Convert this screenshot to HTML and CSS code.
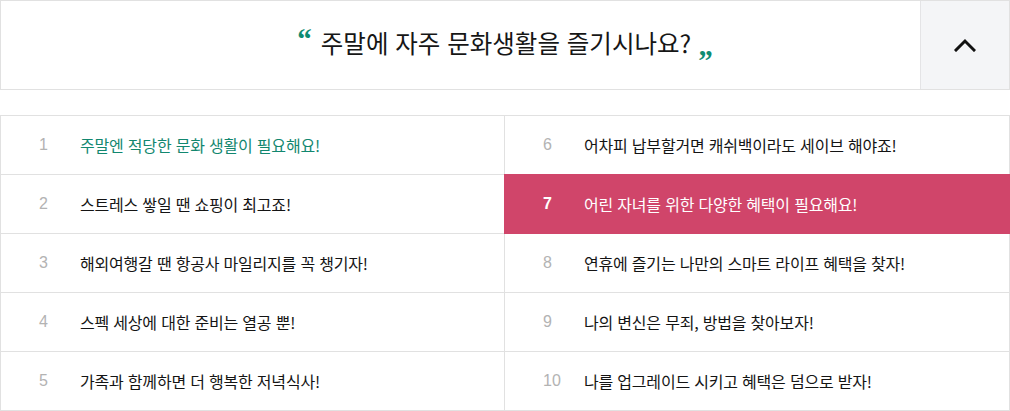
FILE: index.html
```html
<!DOCTYPE html>
<html lang="ko">
<head>
<meta charset="utf-8">
<title>문화생활</title>
<link rel="stylesheet" href="styles.css">
</head>
<body>
<div class="wrap">
  <div class="head">
    <h2 class="title"><span class="q q-open">“</span>주말에 자주 문화생활을 즐기시나요?<span class="q q-close">”</span></h2>
    <button class="toggle" type="button" aria-label="접기">
      <svg width="22" height="14" viewBox="0 0 22 14"><polyline points="2,12 11,3 20,12" fill="none" stroke="#111" stroke-width="3" stroke-linecap="square"/></svg>
    </button>
  </div>
  <ol class="list">
    <li class="item item-green"><span class="num">1</span><span class="txt">주말엔 적당한 문화 생활이 필요해요!</span></li>
    <li class="item"><span class="num">2</span><span class="txt">스트레스 쌓일 땐 쇼핑이 최고죠!</span></li>
    <li class="item"><span class="num">3</span><span class="txt">해외여행갈 땐 항공사 마일리지를 꼭 챙기자!</span></li>
    <li class="item"><span class="num">4</span><span class="txt">스펙 세상에 대한 준비는 열공 뿐!</span></li>
    <li class="item"><span class="num">5</span><span class="txt">가족과 함께하면 더 행복한 저녁식사!</span></li>
    <li class="item"><span class="num">6</span><span class="txt">어차피 납부할거면 캐쉬백이라도 세이브 해야죠!</span></li>
    <li class="item item-active"><span class="num">7</span><span class="txt">어린 자녀를 위한 다양한 혜택이 필요해요!</span></li>
    <li class="item"><span class="num">8</span><span class="txt">연휴에 즐기는 나만의 스마트 라이프 혜택을 찾자!</span></li>
    <li class="item"><span class="num">9</span><span class="txt">나의 변신은 무죄, 방법을 찾아보자!</span></li>
    <li class="item"><span class="num">10</span><span class="txt">나를 업그레이드 시키고 혜택은 덤으로 받자!</span></li>
  </ol>
</div>
</body>
</html>
```
FILE: styles.css
```css
* { box-sizing: border-box; }
html, body { margin: 0; padding: 0; background: #fff; }
body { font-family: "Noto Sans CJK KR", "Noto Sans", sans-serif; color: #1a1a1a; }
.wrap { width: 1010px; }
.head {
  position: relative;
  height: 90px;
  border: 1px solid #e1e1e1;
  display: flex;
  align-items: center;
  justify-content: center;
}
.title {
  margin: 0;
  font-weight: 400;
  font-size: 24.5px;
  line-height: 30px;
  color: #161616;
  margin-top: -2px;
}
.q {
  font-family: "Liberation Serif", serif;
  font-weight: 700;
  color: #0e8c72;
  font-size: 29px;
  line-height: 0;
}
.q-open { margin-right: 9px; vertical-align: 4px; }
.q-close { margin-left: 7px; vertical-align: -17px; }
.toggle {
  position: absolute;
  top: 0;
  right: 0;
  bottom: 0;
  width: 89px;
  padding: 0;
  border: 0;
  border-left: 1px solid #e4e4e6;
  background: #f4f5f7;
  display: flex;
  align-items: center;
  justify-content: center;
  cursor: pointer;
}
.list {
  list-style: none;
  margin: 25px 0 0;
  padding: 1px;
  background: #e1e1e1;
  display: grid;
  grid-template-columns: 503px 1fr;
  grid-template-rows: repeat(5, 58px);
  grid-auto-flow: column;
  gap: 1px;
}
.item {
  background: #fff;
  display: flex;
  align-items: center;
  padding-left: 38px;
  font-size: 16px;
  color: #141414;
}
.num {
  width: 41px;
  flex: none;
  font-family: "Liberation Sans", Arial, sans-serif;
  font-size: 16px;
  color: #b3b3b3;
}
.txt { letter-spacing: -0.2px; }
.item-green .txt { color: #12876f; }
.item-active {
  margin: -1px;
  padding-left: 39px;
  background: #d0456a;
  color: #fff;
}
.item-active .num { color: #fff; font-weight: 700; }
```
